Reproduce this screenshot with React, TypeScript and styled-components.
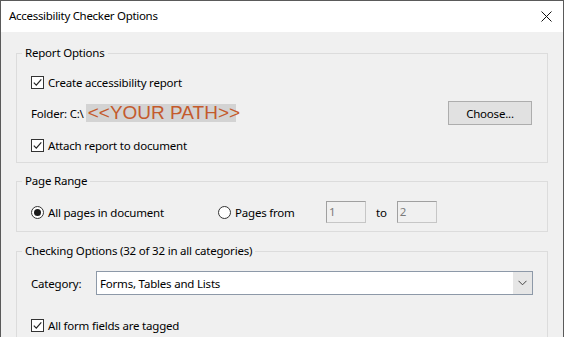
import React from 'react';
import styled, { createGlobalStyle } from 'styled-components';

const GlobalStyle = createGlobalStyle`
	html, body {
		margin: 0;
		padding: 0;
		background: #f0f0f0;
	}
	body {
		font-family: 'Noto Sans', 'Open Sans', sans-serif;
		font-size: 11.5px;
		letter-spacing: -0.2px;
		color: #000;
	}
`;

const Window = styled.div`
	width: 564px;
	height: 337px;
	box-sizing: border-box;
	border: 1px solid #5a5a5a;
	border-bottom: none;
	display: flex;
	flex-direction: column;
	background: #f0f0f0;
	overflow: hidden;
`;

const TitleBar = styled.div`
	height: 31px;
	flex-shrink: 0;
	background: #fff;
	display: flex;
	align-items: center;
	justify-content: space-between;
	padding: 0 9px 0 8px;
`;

const Title = styled.span`
	font-size: 11.5px;
	letter-spacing: -0.3px;
	color: #000;
	margin-top: -2px;
`;

const CloseButton = styled.button`
	border: none;
	background: transparent;
	padding: 0;
	width: 14px;
	height: 14px;
	display: flex;
	align-items: center;
	justify-content: center;
	margin-right: 1px;
	margin-top: -1px;
`;

const Body = styled.div`
	display: flex;
	flex-direction: column;
	padding: 13px 15px 0 15px;
`;

const Group = styled.fieldset<{ $gap?: number; $pt?: number; $pb?: number }>`
	margin: 0 0 ${(p) => p.$gap ?? 0}px 0;
	padding: ${(p) => p.$pt ?? 12}px 14px ${(p) => p.$pb ?? 6}px 14px;
	border: 1px solid #dcdcdc;
	min-width: 0;
	display: flex;
	flex-direction: column;
`;

const Legend = styled.legend`
	margin-left: -9px;
	padding: 0 3px 0 3px;
	line-height: 16px;
	color: #000;
`;

const Row = styled.div<{ $h?: number; $mt?: number }>`
	display: flex;
	align-items: center;
	height: ${(p) => p.$h ?? 20}px;
	margin-top: ${(p) => p.$mt ?? 0}px;
`;

const CheckLabel = styled.label`
	display: flex;
	align-items: center;
	gap: 4px;
	white-space: nowrap;
`;

const Box = styled.span`
	width: 11px;
	height: 11px;
	border: 1px solid #333;
	background: #fff;
	display: inline-flex;
	align-items: center;
	justify-content: center;
	flex-shrink: 0;
`;

const Radio = styled.span<{ $on?: boolean }>`
	width: 11px;
	height: 11px;
	border: 1px solid #333;
	border-radius: 50%;
	background: #fff;
	display: inline-flex;
	align-items: center;
	justify-content: center;
	flex-shrink: 0;
	&::after {
		content: '';
		width: 7px;
		height: 7px;
		border-radius: 50%;
		background: ${(p) => (p.$on ? '#1a1a1a' : 'transparent')};
	}
`;

const FolderText = styled.span`
	white-space: nowrap;
`;

const PathMark = styled.span`
	display: inline-block;
	background: #d3d3d3;
	height: 18px;
	width: 150px;
	margin-left: 2px;
	font-family: 'Liberation Sans', Arial, sans-serif;
	font-size: 19px;
	letter-spacing: 0;
	line-height: 18px;
	color: #c45a2c;
	white-space: nowrap;
	padding-left: 2px;
	box-sizing: border-box;
`;

const Spacer = styled.div`
	flex: 1;
`;

const Button = styled.button`
	width: 84px;
	height: 24px;
	background: #e1e1e1;
	border: 1px solid #adadad;
	font-family: inherit;
	font-size: 11.5px;
	letter-spacing: -0.2px;
	color: #000;
	padding: 0;
	margin-right: 1px;
`;

const RadioGroup = styled.div<{ $w: number }>`
	width: ${(p) => p.$w}px;
	display: flex;
	align-items: center;
`;

const NumberInput = styled.div`
	width: 36px;
	height: 20px;
	border: 1px solid #c6c6c6;
	border-top-color: #a0a0a0;
	border-left-color: #a0a0a0;
	background: #f0f0f0;
	color: #7a7a7a;
	padding-left: 2px;
	line-height: 20px;
`;

const ToLabel = styled.span`
	margin: 0 10px 0 10px;
`;

const CategoryLabel = styled.span`
	width: 65px;
`;

const Select = styled.div`
	flex: 1;
	height: 22px;
	border: 1px solid #8d99a8;
	background: #fff;
	display: flex;
	align-items: stretch;
`;

const SelectValue = styled.span`
	flex: 1;
	padding-left: 3px;
	display: flex;
	align-items: center;
`;

const SelectArrow = styled.span`
	width: 19px;
	background: #e6e6e6;
	display: flex;
	align-items: center;
	justify-content: center;
`;

const Check = () => (
	<Box>
		<svg width="9" height="9" viewBox="0 0 9 9">
			<path d="M0.8 4.6 L3.3 7.2 L8.3 1.4" fill="none" stroke="#222" strokeWidth="1.2" />
		</svg>
	</Box>
);

export default function App() {
	return (
		<>
			<GlobalStyle />
			<Window>
				<TitleBar>
					<Title>Accessibility Checker Options</Title>
					<CloseButton aria-label="Close">
						<svg width="11" height="11" viewBox="0 0 11 11">
							<path d="M0.5 0.5 L10.5 10.5 M10.5 0.5 L0.5 10.5" stroke="#111" strokeWidth="1" />
						</svg>
					</CloseButton>
				</TitleBar>
				<Body>
					<Group $gap={10} $pt={11} $pb={7}>
						<Legend>Report Options</Legend>
						<Row>
							<CheckLabel>
								<Check />
								Create accessibility report
							</CheckLabel>
						</Row>
						<Row $h={24} $mt={9}>
							<FolderText>Folder: C:\</FolderText>
							<PathMark>&lt;&lt;YOUR PATH&gt;&gt;</PathMark>
							<Spacer />
							<Button>Choose...</Button>
						</Row>
						<Row $mt={10}>
							<CheckLabel>
								<Check />
								Attach report to document
							</CheckLabel>
						</Row>
					</Group>

					<Group $gap={11} $pt={12} $pb={8}>
						<Legend>Page Range</Legend>
						<Row $h={22}>
							<RadioGroup $w={187}>
								<CheckLabel>
									<Radio $on />
									All pages in document
								</CheckLabel>
							</RadioGroup>
							<RadioGroup $w={108}>
								<CheckLabel>
									<Radio />
									Pages from
								</CheckLabel>
							</RadioGroup>
							<NumberInput>1</NumberInput>
							<ToLabel>to</ToLabel>
							<NumberInput>2</NumberInput>
						</Row>
					</Group>

					<Group $pt={12} $pb={10}>
						<Legend>Checking Options (32 of 32 in all categories)</Legend>
						<Row $h={24}>
							<CategoryLabel>Category:</CategoryLabel>
							<Select>
								<SelectValue>Forms, Tables and Lists</SelectValue>
								<SelectArrow>
									<svg width="9" height="6" viewBox="0 0 9 6">
										<path d="M0.5 0.8 L4.5 4.8 L8.5 0.8" fill="none" stroke="#444" strokeWidth="1" />
									</svg>
								</SelectArrow>
							</Select>
						</Row>
						<Row $mt={20}>
							<CheckLabel>
								<Check />
								All form fields are tagged
							</CheckLabel>
						</Row>
					</Group>
				</Body>
			</Window>
		</>
	);
}
